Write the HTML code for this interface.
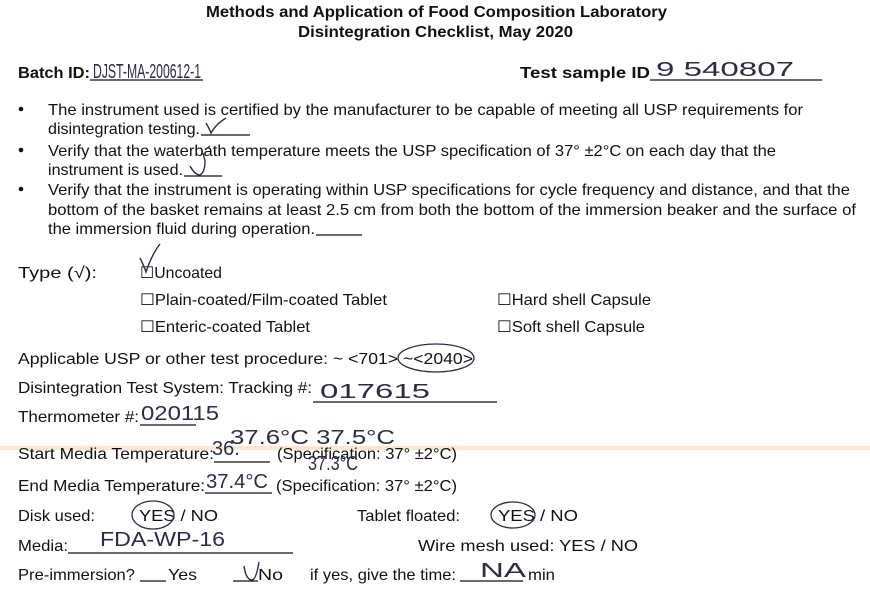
<!DOCTYPE html>
<html><head><meta charset="utf-8"><style>
html,body{margin:0;padding:0;background:#fff;width:870px;height:597px;overflow:hidden}
svg{display:block}
text{font-family:"Liberation Sans",Arial,sans-serif;fill:#111;font-size:16px}
.b{font-weight:bold}
.h{font-family:"Liberation Sans",sans-serif;fill:#2a2d4a;font-size:20px;font-weight:normal}
line{stroke:#111;stroke-width:1.2}
</style></head><body>
<svg width="870" height="597" viewBox="0 0 870 597" xmlns="http://www.w3.org/2000/svg">
<rect x="0" y="446" width="870" height="4" fill="#fbe6cf"/>
<text class="b" x="206" y="17" textLength="461" lengthAdjust="spacingAndGlyphs" font-size="15">Methods and Application of Food Composition Laboratory</text>
<text class="b" x="298" y="37" textLength="275" lengthAdjust="spacingAndGlyphs" font-size="15">Disintegration Checklist, May 2020</text>

<text class="b" x="18" y="78" textLength="72" lengthAdjust="spacingAndGlyphs">Batch ID:</text>
<line x1="90" y1="80" x2="203" y2="80"/>
<text class="h" x="93" y="78" textLength="108" lengthAdjust="spacingAndGlyphs" font-size="30">DJST-MA-200612-1</text>
<text class="b" x="520" y="78" textLength="130" lengthAdjust="spacingAndGlyphs">Test sample ID</text>
<line x1="650" y1="80" x2="822" y2="80"/>
<text class="h" x="656" y="76" textLength="138" lengthAdjust="spacingAndGlyphs" font-size="24">9 540807</text>

<circle cx="21" cy="109" r="2.3" fill="#111"/>
<circle cx="21" cy="150" r="2.3" fill="#111"/>
<circle cx="21" cy="189" r="2.3" fill="#111"/>
<text x="48" y="115" textLength="755" lengthAdjust="spacingAndGlyphs">The instrument used is certified by the manufacturer to be capable of meeting all USP requirements for</text>
<text x="48" y="134" textLength="152" lengthAdjust="spacingAndGlyphs">disintegration testing.</text>
<line x1="201" y1="135" x2="250" y2="135"/>
<path d="M206 123 q4 7 5 10 q5 -9 15 -15" stroke="#2a2d4a" stroke-width="1.4" fill="none"/>
<text x="48" y="156" textLength="728" lengthAdjust="spacingAndGlyphs">Verify that the waterbath temperature meets the USP specification of 37° ±2°C on each day that the</text>
<text x="48" y="175" textLength="135" lengthAdjust="spacingAndGlyphs">instrument is used.</text>
<line x1="184" y1="176" x2="222" y2="176"/>
<path d="M190 166 q5 9 10 9 q5 -3 5 -14 l-2 -8 M205 150 l5 -4" stroke="#2a2d4a" stroke-width="1.4" fill="none"/>
<text x="48" y="195" textLength="802" lengthAdjust="spacingAndGlyphs">Verify that the instrument is operating within USP specifications for cycle frequency and distance, and that the</text>
<text x="48" y="215" textLength="808" lengthAdjust="spacingAndGlyphs">bottom of the basket remains at least 2.5 cm from both the bottom of the immersion beaker and the surface of</text>
<text x="48" y="234" textLength="267" lengthAdjust="spacingAndGlyphs">the immersion fluid during operation.</text>
<line x1="316" y1="235" x2="362" y2="235"/>

<text x="18" y="278" textLength="79" lengthAdjust="spacingAndGlyphs">Type (√):</text>
<text x="140" y="278" textLength="82" lengthAdjust="spacingAndGlyphs">☐Uncoated</text>
<path d="M140 258 q4 8 6 14 q6 -18 14 -28" stroke="#2a2d4a" stroke-width="1.4" fill="none"/>
<text x="140" y="305" textLength="247" lengthAdjust="spacingAndGlyphs">☐Plain-coated/Film-coated Tablet</text>
<text x="497" y="305" textLength="154" lengthAdjust="spacingAndGlyphs">☐Hard shell Capsule</text>
<text x="140" y="332" textLength="170" lengthAdjust="spacingAndGlyphs">☐Enteric-coated Tablet</text>
<text x="497" y="332" textLength="148" lengthAdjust="spacingAndGlyphs">☐Soft shell Capsule</text>

<text x="18" y="364" textLength="455" lengthAdjust="spacingAndGlyphs">Applicable USP or other test procedure:  ~ &lt;701&gt;   ~&lt;2040&gt;</text>
<ellipse cx="436" cy="358" rx="38" ry="14" stroke="#2a2d4a" stroke-width="1.3" fill="none"/>
<text x="18" y="393" textLength="294" lengthAdjust="spacingAndGlyphs">Disintegration Test System:  Tracking #:</text>
<line x1="313" y1="402" x2="497" y2="402"/>
<text class="h" x="320" y="398" textLength="110" lengthAdjust="spacingAndGlyphs" font-size="28">017615</text>
<text x="18" y="422" textLength="121" lengthAdjust="spacingAndGlyphs">Thermometer #:</text>
<line x1="140" y1="425" x2="196" y2="425"/>
<text class="h" x="141" y="420" textLength="78" lengthAdjust="spacingAndGlyphs" font-size="22">020115</text>
<text class="h" x="230" y="444" textLength="165" lengthAdjust="spacingAndGlyphs" font-size="20">37.6°C 37.5°C</text>
<text x="18" y="459" textLength="196" lengthAdjust="spacingAndGlyphs">Start Media Temperature:</text>
<line x1="214" y1="462" x2="270" y2="462"/>
<text class="h" x="212" y="455" font-size="17">36.</text>
<text x="277" y="459" textLength="180" lengthAdjust="spacingAndGlyphs">(Specification: 37° ±2°C)</text>
<text class="h" x="308" y="470" textLength="50" lengthAdjust="spacingAndGlyphs" font-size="20">37.3°C</text>
<text x="18" y="491" textLength="187" lengthAdjust="spacingAndGlyphs">End Media Temperature:</text>
<line x1="205" y1="493" x2="272" y2="493"/>
<text class="h" x="206" y="488" textLength="62" lengthAdjust="spacingAndGlyphs" font-size="20">37.4°C</text>
<text x="276" y="491" textLength="181" lengthAdjust="spacingAndGlyphs">(Specification: 37° ±2°C)</text>

<text x="18" y="521" textLength="77" lengthAdjust="spacingAndGlyphs">Disk used:</text>
<text x="139" y="521" textLength="79" lengthAdjust="spacingAndGlyphs">YES / NO</text>
<ellipse cx="153" cy="515" rx="21" ry="14" stroke="#2a2d4a" stroke-width="1.3" fill="none"/>
<text x="357" y="521" textLength="103" lengthAdjust="spacingAndGlyphs">Tablet floated:</text>
<text x="498" y="521" textLength="80" lengthAdjust="spacingAndGlyphs">YES / NO</text>
<ellipse cx="513" cy="515" rx="22" ry="13" stroke="#2a2d4a" stroke-width="1.3" fill="none"/>
<text x="18" y="551" textLength="50" lengthAdjust="spacingAndGlyphs">Media:</text>
<line x1="68" y1="553" x2="293" y2="553"/>
<text class="h" x="100" y="546" textLength="125" lengthAdjust="spacingAndGlyphs" font-size="22">FDA-WP-16</text>
<text x="418" y="551" textLength="220" lengthAdjust="spacingAndGlyphs">Wire mesh used:   YES  /  NO</text>
<text x="18" y="580" textLength="117" lengthAdjust="spacingAndGlyphs">Pre-immersion?</text>
<line x1="140" y1="581" x2="166" y2="581"/>
<text x="168" y="580" textLength="29" lengthAdjust="spacingAndGlyphs">Yes</text>
<line x1="233" y1="581" x2="258" y2="581"/>
<text x="258" y="580" textLength="25" lengthAdjust="spacingAndGlyphs">No</text>
<path d="M244 566 q2 14 8 14 q4 0 7 -18" stroke="#2a2d4a" stroke-width="1.4" fill="none"/>
<text x="310" y="580" textLength="146" lengthAdjust="spacingAndGlyphs">if yes, give the time:</text>
<line x1="460" y1="581" x2="523" y2="581"/>
<text x="528" y="580" textLength="27" lengthAdjust="spacingAndGlyphs">min</text>
<text class="h" x="480" y="577" textLength="46" lengthAdjust="spacingAndGlyphs" font-size="22">NA</text>
</svg>
</body></html>
